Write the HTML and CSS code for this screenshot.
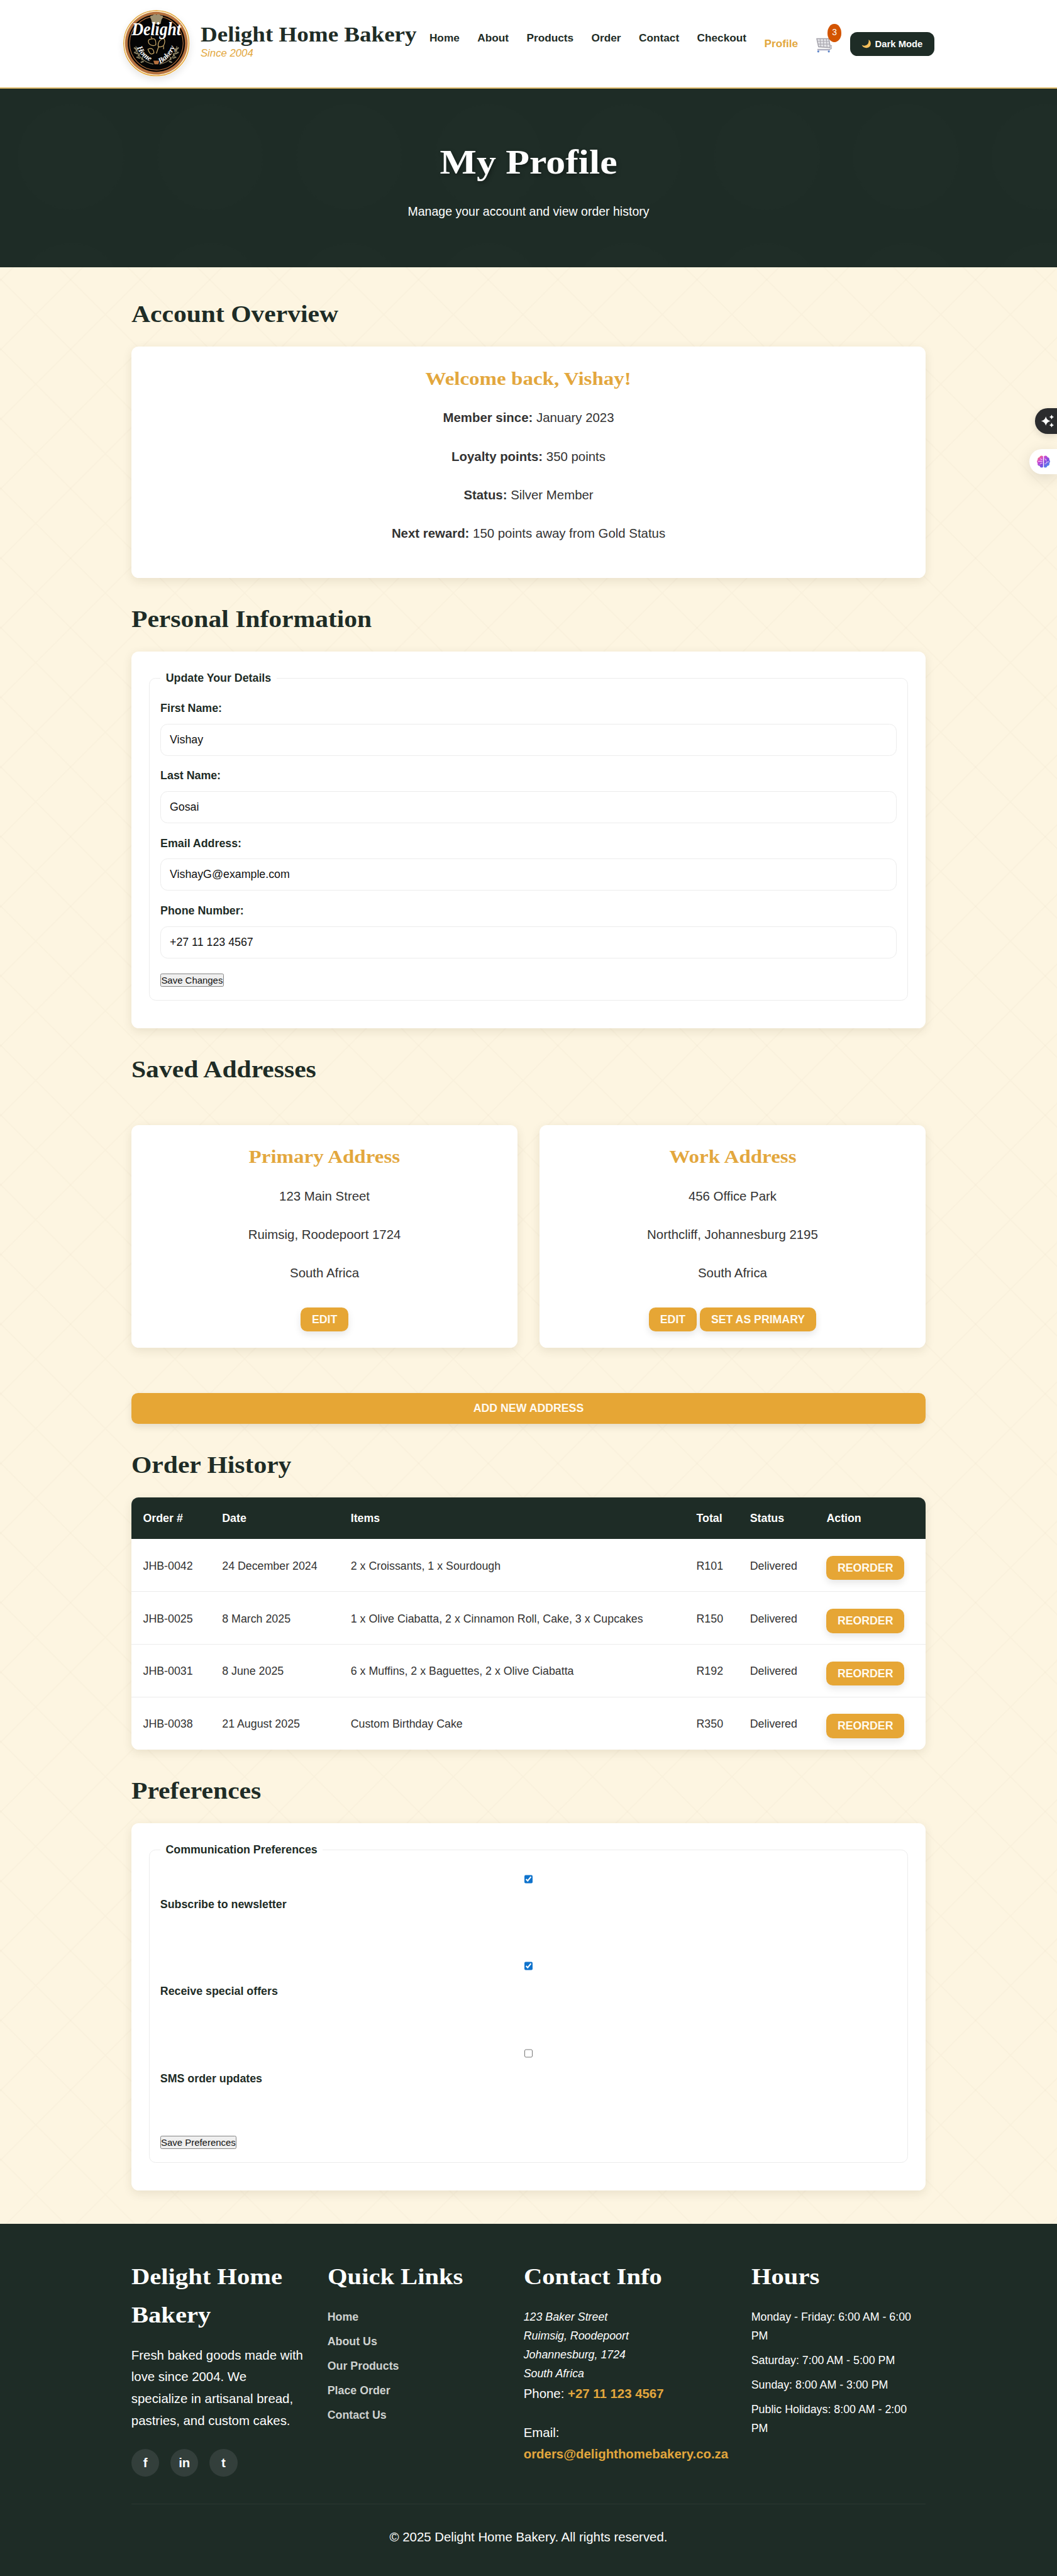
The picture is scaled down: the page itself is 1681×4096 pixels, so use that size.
FILE: index.html
```html
<!DOCTYPE html>
<html lang="en">
<head>
<meta charset="utf-8">
<title>My Profile - Delight Home Bakery</title>
<link rel="stylesheet" href="styles.css">
</head>
<body>
<header class="site-header">
  <svg class="logo" viewBox="0 0 110 110" aria-label="Delight Home Bakery">
    <defs>
      <path id="arc-home" d="M23 62 Q29 80 51 88"/>
      <path id="arc-bakery" d="M61 89 Q80 80 88 56"/>
    </defs>
    <circle cx="55" cy="55" r="54.2" fill="#fff3d6" stroke="#e3a73d" stroke-width="1.6"/>
    <circle cx="55" cy="55" r="52" fill="#b5713f"/>
    <circle cx="55" cy="55" r="47.5" fill="#050505"/>
    <circle cx="55" cy="55" r="44.5" fill="none" stroke="#b5713f" stroke-width="1.2"/>
    <path d="M48 23 L46.500 16 Q42 9 49 9 Q52 5 55 8 Q59 5 62 9 Q69 9 63.500 16 L62 23 Z" fill="#9d9070"/>
    <g fill="none" stroke="#c9a868" stroke-width="1.300">
      <path d="M43 56 Q39 48 48 48 Q55 46 54 58 Q48 61 43 56 Z M58 60 Q57 50 67 47 Q71 51 67 59 Q61 63 58 60 Z M41 65 Q50 61 51 71 Q45 77 41 65 Z M48 48 L46 44 M59 60 L55 72 M67 60 L67 65"/>
      <path d="M21 60 Q24 84 50 90 M89 60 Q86 84 60 90" stroke="#8f8566"/>
      <path d="M22 66 l-4 -4 M24 73 l-6 -3 M28 80 l-6 -2 M34 85 l-5 2 M21 69 l3 -5 M25 77 l2 -5 M31 83 l1 -5 M88 66 l4 -4 M86 73 l6 -3 M82 80 l6 -2 M76 85 l5 2 M89 69 l-3 -5 M85 77 l-2 -5 M79 83 l-1 -5" stroke="#8f8566" stroke-width="2.200"/>
    </g>
    <path d="M50 84 h10 l-2 6 h-6 z" fill="#b5713f"/>
    <text class="logo-main" x="55" y="42" text-anchor="middle" textLength="82" lengthAdjust="spacingAndGlyphs">Delight</text>
    <text class="logo-sub"><textPath href="#arc-home">Home</textPath></text>
    <text class="logo-sub"><textPath href="#arc-bakery">Bakery</textPath></text>
  </svg>
  <div class="brand">
    <div class="brand-name">Delight Home Bakery</div>
    <div class="brand-since">Since 2004</div>
  </div>
  <nav class="nav">
    <a>Home</a><a>About</a><a>Products</a><a>Order</a><a>Contact</a><a>Checkout</a>
    <a class="active">Profile</a>
    <div class="cart">
      <svg viewBox="0 0 27 25">
        <path d="M1 1.500 H21 L23.500 16.500 L4 15 Z" fill="#e4e4e8" stroke="#a5a3ab" stroke-width="1.600" stroke-linejoin="round"/>
        <path d="M6.500 2 L7.500 15 M12 2 L12.500 15.500 M17 2 L18 16 M2 6 H21.500 M3 10.500 H22.500" stroke="#aaa8b0" stroke-width="1.200"/>
        <path d="M22 13 Q26 12 26 15 Q26 19 21 19.500 H2" fill="none" stroke="#b4b2bc" stroke-width="1.700"/>
        <path d="M2 20.500 H23" stroke="#a6a9c4" stroke-width="1.200"/>
        <circle cx="3.500" cy="22.800" r="1.700" fill="#5a82c8"/><circle cx="21" cy="22.800" r="1.700" fill="#5a82c8"/>
      </svg>
      <span class="badge">3</span>
    </div>
    <button class="theme-btn"><svg viewBox="0 0 16 14"><path d="M12 0 Q13 7 7.500 9.500 Q4 11 .5 9 Q3 14 8.500 13.800 Q15.500 13 15.500 6.500 Q15.500 2.500 12 0 Z" fill="#f6bf5c"/></svg>Dark Mode</button>
  </nav>
</header>

<section class="hero">
  <h1>My Profile</h1>
  <p>Manage your account and view order history</p>
</section>

<main>
  <section>
    <h2>Account Overview</h2>
    <div class="card overview">
      <h3>Welcome back, Vishay!</h3>
      <p><strong>Member since:</strong> January 2023</p>
      <p><strong>Loyalty points:</strong> 350 points</p>
      <p><strong>Status:</strong> Silver Member</p>
      <p><strong>Next reward:</strong> 150 points away from Gold Status</p>
    </div>
  </section>

  <section>
    <h2>Personal Information</h2>
    <form class="card details">
      <fieldset>
        <legend>Update Your Details</legend>
        <label>First Name:</label><input class="field" value="Vishay">
        <label>Last Name:</label><input class="field" value="Gosai">
        <label>Email Address:</label><input class="field" value="VishayG@example.com">
        <label>Phone Number:</label><input class="field" value="+27 11 123 4567">
        <button type="button" class="plain save-changes">Save Changes</button>
      </fieldset>
    </form>
  </section>

  <section>
    <h2>Saved Addresses</h2>
    <div class="addresses">
      <div class="card">
        <h3>Primary Address</h3>
        <p>123 Main Street</p><p>Ruimsig, Roodepoort 1724</p><p>South Africa</p>
        <div class="actions"><button class="btn">EDIT</button></div>
      </div>
      <div class="card">
        <h3>Work Address</h3>
        <p>456 Office Park</p><p>Northcliff, Johannesburg 2195</p><p>South Africa</p>
        <div class="actions"><button class="btn">EDIT</button><button class="btn">SET AS PRIMARY</button></div>
      </div>
    </div>
    <button class="btn add">ADD NEW ADDRESS</button>
  </section>

  <section>
    <h2>Order History</h2>
    <div class="table-wrap">
      <table>
        <colgroup><col class="c-order"><col class="c-date"><col class="c-items"><col class="c-total"><col class="c-status"><col></colgroup>
        <thead><tr><th>Order #</th><th>Date</th><th>Items</th><th>Total</th><th>Status</th><th>Action</th></tr></thead>
        <tbody>
          <tr><td>JHB-0042</td><td>24 December 2024</td><td>2 x Croissants, 1 x Sourdough</td><td>R101</td><td>Delivered</td><td><button class="btn">REORDER</button></td></tr>
          <tr><td>JHB-0025</td><td>8 March 2025</td><td>1 x Olive Ciabatta, 2 x Cinnamon Roll, Cake, 3 x Cupcakes</td><td>R150</td><td>Delivered</td><td><button class="btn">REORDER</button></td></tr>
          <tr><td>JHB-0031</td><td>8 June 2025</td><td>6 x Muffins, 2 x Baguettes, 2 x Olive Ciabatta</td><td>R192</td><td>Delivered</td><td><button class="btn">REORDER</button></td></tr>
          <tr><td>JHB-0038</td><td>21 August 2025</td><td>Custom Birthday Cake</td><td>R350</td><td>Delivered</td><td><button class="btn">REORDER</button></td></tr>
        </tbody>
      </table>
    </div>
  </section>

  <section>
    <h2>Preferences</h2>
    <form class="card prefs">
      <fieldset>
        <legend>Communication Preferences</legend>
        <div class="pref"><input type="checkbox" checked><label>Subscribe to newsletter</label></div>
        <div class="pref"><input type="checkbox" checked><label>Receive special offers</label></div>
        <div class="pref"><input type="checkbox"><label>SMS order updates</label></div>
        <button type="button" class="plain save-prefs">Save Preferences</button>
      </fieldset>
    </form>
  </section>
</main>

<footer>
  <div class="footer-grid">
    <div class="about">
      <h3>Delight Home<br>Bakery</h3>
      <p>Fresh baked goods made with<br>love since 2004. We<br>specialize in artisanal bread,<br>pastries, and custom cakes.</p>
      <div class="social"><a>f</a><a>in</a><a>t</a></div>
    </div>
    <div>
      <h3>Quick Links</h3>
      <ul class="links"><li>Home</li><li>About Us</li><li>Our Products</li><li>Place Order</li><li>Contact Us</li></ul>
    </div>
    <div>
      <h3>Contact Info</h3>
      <address>123 Baker Street<br>Ruimsig, Roodepoort<br>Johannesburg, 1724<br>South Africa</address>
      <p class="phone">Phone: <a>+27 11 123 4567</a></p>
      <p>Email:<br><a>orders@delighthomebakery.co.za</a></p>
    </div>
    <div>
      <h3>Hours</h3>
      <ul><li>Monday - Friday: 6:00 AM - 6:00<br>PM</li><li>Saturday: 7:00 AM - 5:00 PM</li><li>Sunday: 8:00 AM - 3:00 PM</li><li>Public Holidays: 8:00 AM - 2:00<br>PM</li></ul>
    </div>
  </div>
  <p class="copyright">© 2025 Delight Home Bakery. All rights reserved.</p>
</footer>

<div class="float sparkle">
  <svg viewBox="0 0 24 24"><path fill="#fff" d="M9 4 Q10.500 10.500 17 12 Q10.500 13.500 9 20 Q7.500 13.500 1 12 Q7.500 10.500 9 4 Z M19 1 Q19.800 4.200 23 5 Q19.800 5.800 19 9 Q18.200 5.800 15 5 Q18.200 4.200 19 1 Z M19 15 Q19.800 18.200 23 19 Q19.800 19.800 19 23 Q18.200 19.800 15 19 Q18.200 18.200 19 15 Z"/></svg>
</div>
<div class="float brain">
  <svg viewBox="0 0 22 21">
    <defs><linearGradient id="bg" x1="0" y1="0" x2="1" y2="1"><stop offset="0" stop-color="#ff8a3d"/><stop offset=".3" stop-color="#d44ad0"/><stop offset=".6" stop-color="#7a4fe0"/><stop offset="1" stop-color="#35a8f5"/></linearGradient></defs>
    <path fill="url(#bg)" d="M10.300 1.500 V19.500 Q6 22 4.500 17.500 Q.5 17 1.300 13 Q-1 10 1.300 7.500 Q1 4 4 3.500 Q6 -1 10.300 1.500 Z M11.700 1.500 V19.500 Q16 22 17.500 17.500 Q21.500 17 20.700 13 Q23 10 20.700 7.500 Q21 4 18 3.500 Q16 -1 11.700 1.500 Z"/>
    <path fill="none" stroke="#f3dcff" stroke-width="1" d="M2 10 H9 M6 5 Q6 8 9 7 M5 15 Q6 12 9 13 M13 6 Q16 6 15.500 9 M13 14 Q16 15 16 11 Q19 12 20 10"/>
  </svg>
</div>
</body>
</html>
```
FILE: styles.css
```css
html { font-size: 9.5783px; }
* { box-sizing: border-box; margin: 0; padding: 0; }
body {
  position: relative;
  overflow-x: hidden;
  font-family: "Liberation Sans", Arial, sans-serif;
  font-size: 2.13rem;
  line-height: 3.6rem;
  color: #333;
  background-color: #fdf5e1;
  background-image:
    linear-gradient(45deg, transparent 49.4%, rgba(120, 90, 40, .022) 49.5%, rgba(120, 90, 40, .022) 50.5%, transparent 50.6%),
    linear-gradient(-45deg, transparent 49.4%, rgba(120, 90, 40, .022) 49.5%, rgba(120, 90, 40, .022) 50.5%, transparent 50.6%);
  background-size: 11.56rem 11.56rem;
  background-position: 5.93rem 5.97rem;
}
h1, h2, h3, .brand-name {
  width: fit-content;
  font-family: "Liberation Serif", "Times New Roman", serif;
  font-weight: bold;
  white-space: nowrap;
  transform: scaleX(1.105);
  transform-origin: left center;
}
button { font-family: inherit; }
ul { list-style: none; }

.site-header {
  display: flex;
  align-items: flex-start;
  height: 14.7rem;
  padding-left: 20.5rem;
  background: #fff;
  border-bottom: .25rem solid #dcb866;
}
.logo { width: 11rem; height: 11rem; margin-top: 1.7rem; border-radius: 50%; box-shadow: 0 .5rem 1.2rem rgba(0, 0, 0, .1); }
.logo-main { font: italic bold 31px "Liberation Serif", serif; fill: #fff; }
.logo-sub { font: italic bold 13px "Liberation Serif", serif; fill: #fff; }
.brand { width: 38rem; margin-left: 1.8rem; padding-top: 3.78rem; }
.brand-name { font-size: 3.5rem; line-height: 4rem; color: #1e2c26; }
.brand-since { margin-top: -.1rem; font-size: 1.75rem; line-height: 2.4rem; font-style: italic; color: #e3a73d; }
.nav { display: flex; align-items: flex-start; gap: 2.97rem; font-size: 1.8rem; font-weight: bold; line-height: 3rem; color: #1e2c26; }
.nav > a { margin-top: 4.83rem; }
.nav > .active { margin-top: 5.75rem; color: #e3a73d; }
.cart { position: relative; width: 2.7rem; margin-top: 6.3rem; }
.cart svg { display: block; width: 2.7rem; height: 2.5rem; }
.badge { position: absolute; left: 1.96rem; top: -2.3rem; width: 2.24rem; height: 2.95rem; border-radius: 50%; background: #d35400; color: #fff; font-size: 1.45rem; font-weight: normal; line-height: 2.8rem; text-align: center; }
.theme-btn { display: flex; align-items: center; justify-content: center; gap: .65rem; width: 13.95rem; height: 3.98rem; margin-top: 5.3rem; border: 0; border-radius: 1.2rem; background: #1e2c26; color: #fff; font-size: 1.55rem; font-weight: bold; white-space: nowrap; }
.theme-btn svg { width: 1.6rem; height: 1.4rem; }

.hero {
  height: 29.63rem;
  padding-top: 8.13rem;
  text-align: center;
  color: #fff;
  background-color: #1e2c26;
  background-image: radial-gradient(circle, rgba(255, 255, 255, .004) 8.5rem, transparent 9.2rem);
  background-size: 23.1rem 23.1rem;
  background-position: .25rem -.25rem;
}
h1 { margin: 0 auto; font-size: 5.84rem; line-height: 8rem; transform-origin: center; text-shadow: .2rem .3rem .6rem rgba(0, 0, 0, .35); }
.hero p { margin-top: 2.49rem; font-size: 2.04rem; }

main { width: 131.8rem; margin: 0 auto; padding: .97rem 0 5.57rem; }
section + section, main > section:first-child { padding-top: 3.8rem; }
h2 { margin-bottom: 2.37rem; padding-top: .1rem; font-size: 3.93rem; line-height: 6rem; color: #1e2c26; }
.card { border-radius: 1.2rem; background: #fff; box-shadow: 0 .5rem 1.6rem rgba(60, 45, 10, .1); }
.card h3 { margin: 0 auto 2.25rem; font-size: 3.12rem; line-height: 5rem; transform-origin: center; color: #e3a73d; }
.card p { margin-bottom: 2.8rem; }
.overview { height: 38.36rem; padding-top: 2.78rem; text-align: center; }

.details { height: 62.5rem; padding: 2.88rem; }
.prefs { height: 60.96rem; padding: 2.85rem; }
fieldset { height: 55rem; padding: 1.9rem 1.8rem 0; border: 1px solid #ececec; border-radius: 1.1rem; font-size: 1.86rem; line-height: 3.12rem; }
.prefs fieldset { height: 53.5rem; }
legend { padding: 0 .9rem; font-weight: bold; color: #1e2c26; }
label { display: block; font-weight: bold; color: #1e2c26; }
.field { display: block; width: 100%; height: 5.3rem; margin: .93rem 0 1.86rem; padding: 0 1.45rem; border: 1px solid #ececec; border-radius: 1.2rem; font: 1.86rem "Liberation Sans", Arial, sans-serif; color: #111; background: #fff; }
.plain { display: block; height: 2.25rem; border: 1px solid #858585; border-radius: .25rem; background: #efefef; color: #111; font-size: 1.56rem; line-height: 1.8rem; }
.save-changes { width: 10.5rem; margin-top: 2.5rem; }
.save-prefs { width: 12.65rem; margin-top: .6rem; }
.pref { height: 14.46rem; padding-top: .66rem; }
.pref input { display: block; width: 1.46rem; height: 1.46rem; margin: 0 auto 1.95rem; accent-color: #0f73cc; }

.addresses { display: grid; grid-template-columns: 1fr 1fr; gap: 3.7rem; margin-top: 6.2rem; }
.addresses .card { height: 36.99rem; padding-top: 2.75rem; text-align: center; }
.actions { display: flex; justify-content: center; gap: .6rem; padding-top: 1.05rem; }
.btn { display: block; height: 4rem; padding: 0 1.83rem; border: 0; border-radius: 1.1rem; background: #e6a635; color: #fffaf0; font-size: 1.85rem; font-weight: bold; line-height: 4rem; white-space: nowrap; box-shadow: 0 .5rem 1.2rem rgba(0, 0, 0, .1); }
.add { width: 100%; height: 5.13rem; margin-top: 7.45rem; }

.table-wrap { overflow: hidden; border-radius: 1.2rem; background: #fff; box-shadow: 0 .5rem 1.6rem rgba(60, 45, 10, .1); }
table { width: 100%; table-layout: fixed; border-collapse: collapse; font-size: 1.86rem; line-height: 3.12rem; }
.c-order { width: 13.13rem; }
.c-date { width: 21.35rem; }
.c-items { width: 57.4rem; }
.c-total { width: 8.9rem; }
.c-status { width: 12.7rem; }
th { height: 6.88rem; padding: .15rem 0 0 1.9rem; background: #1e2c26; color: #fff; text-align: left; }
td { height: 8.73rem; padding: 2.95rem 0 0 1.9rem; vertical-align: top; white-space: nowrap; }
td .btn { margin-top: -.15rem; }
tbody tr + tr td { border-top: 1px solid #ebebeb; }

footer { padding: 5.57rem 21.8rem 4.6rem; background: #1e2c26; color: #fff; }
.footer-grid { display: grid; grid-template-columns: 28.87rem 28.87rem 34.1rem 1fr; column-gap: 3.7rem; height: 40.95rem; border-bottom: .15rem solid #2b3832; line-height: 3.63rem; }
footer h3 { margin-bottom: 1.7rem; font-size: 3.75rem; line-height: 6.34rem; transform: scaleX(1.13); }
.social { display: flex; gap: 1.84rem; margin-top: 2.85rem; }
.social a { width: 4.65rem; height: 4.65rem; border-radius: 50%; background: #333f3b; font-weight: bold; line-height: 4.6rem; text-align: center; }
footer ul, address { margin-top: 1.9rem; font-size: 1.86rem; line-height: 3.14rem; white-space: nowrap; }
footer li { margin-bottom: .94rem; }
.links { font-weight: bold; color: #ced2d0; }
.phone { margin-bottom: 2.8rem; }
.footer-grid p { white-space: nowrap; }
.footer-grid p a { color: #e3a73d; font-weight: bold; }
.copyright { margin-top: 3.7rem; text-align: center; }

.float { position: absolute; right: 0; height: 4.2rem; border-radius: 2.1rem 0 0 2.1rem; }
.float svg { display: block; }
.sparkle { top: 67.8rem; width: 3.7rem; padding: .9rem 0 0 1rem; background: #2b2c2e; box-shadow: 0 .4rem 1.2rem rgba(0, 0, 0, .12); }
.sparkle svg { width: 2.3rem; height: 2.4rem; }
.brain { top: 74.5rem; width: 4.6rem; padding: 1.05rem 0 0 1.25rem; background: #fff; box-shadow: 0 .6rem 2.4rem rgba(0, 0, 0, .12); }
.brain svg { width: 2.2rem; height: 2.1rem; }
```
